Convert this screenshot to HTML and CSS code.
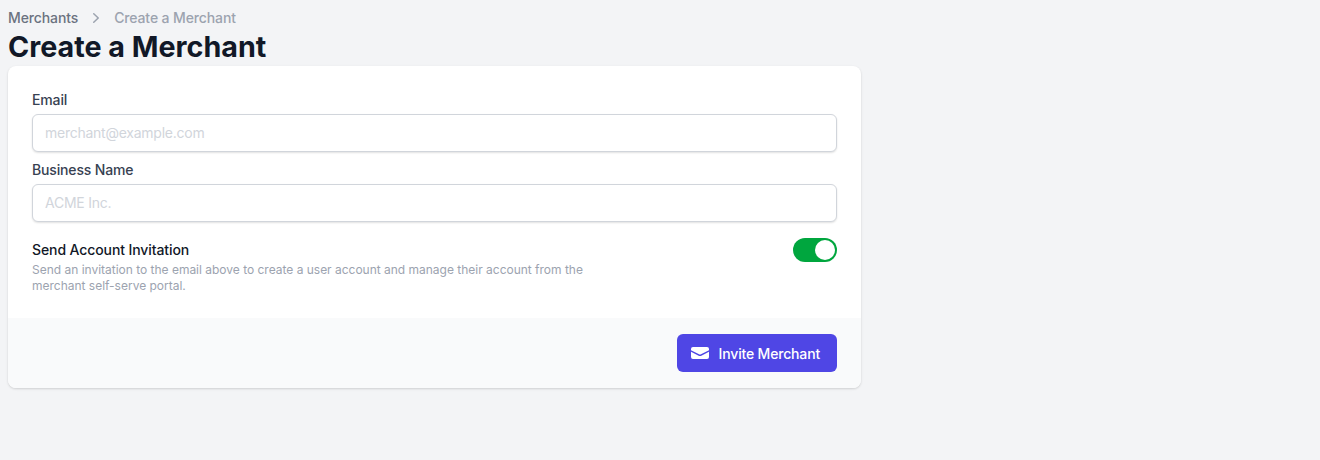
FILE: index.html
```html
<!DOCTYPE html>
<html lang="en">
<head>
    <meta charset="UTF-8">
    <meta name="viewport" content="width=device-width, initial-scale=1.0">
    <title>Create a Merchant</title>
    <link rel="stylesheet" href="styles.css">
</head>
<body>
    <div class="page">
        <nav class="breadcrumb">
            <a class="crumb-link">Merchants</a>
            <svg class="crumb-sep" viewBox="0 0 20 20" fill="currentColor" aria-hidden="true">
                <path fill-rule="evenodd" d="M7.21 14.77a.75.75 0 0 1 .02-1.06L11.17 10 7.23 6.29a.75.75 0 1 1 1.04-1.08l4.5 4.25a.75.75 0 0 1 0 1.08l-4.5 4.25a.75.75 0 0 1-1.06-.02Z" clip-rule="evenodd"/>
            </svg>
            <span class="crumb-current">Create a Merchant</span>
        </nav>
        <h1 class="title">Create a Merchant</h1>

        <form class="card">
            <div class="card-body">
                <div class="field">
                    <label class="label" for="email">Email</label>
                    <input class="input" id="email" type="text" placeholder="merchant@example.com">
                </div>
                <div class="field">
                    <label class="label" for="business">Business Name</label>
                    <input class="input" id="business" type="text" placeholder="ACME Inc.">
                </div>
                <div class="invite-row">
                    <div class="invite-text">
                        <div class="invite-title">Send Account Invitation</div>
                        <p class="invite-desc">Send an invitation to the email above to create a user account and manage their account from the merchant self-serve portal.</p>
                    </div>
                    <button class="toggle" type="button" aria-pressed="true"><span class="toggle-knob"></span></button>
                </div>
            </div>
            <div class="card-footer">
                <button class="button" type="button">
                    <svg class="button-icon" viewBox="0 0 20 20" fill="currentColor" aria-hidden="true">
                        <path d="M3 4a2 2 0 0 0-2 2v1.16l8.55 4.27a1 1 0 0 0 .9 0L19 7.16V6a2 2 0 0 0-2-2H3Z"/>
                        <path d="M19 8.84l-7.66 3.83a3 3 0 0 1-2.68 0L1 8.84V14a2 2 0 0 0 2 2h14a2 2 0 0 0 2-2V8.84Z"/>
                    </svg>
                    Invite Merchant
                </button>
            </div>
        </form>
    </div>
</body>
</html>
```

FILE: styles.css
```css
* {
    box-sizing: border-box;
}

body {
    margin: 0;
    padding: 8px;
    background-color: #f3f4f6;
    font-family: Inter, "Liberation Sans", sans-serif;
    color: #111827;
}

.page {
    width: 853px;
}

/* Breadcrumb */
.breadcrumb {
    display: flex;
    align-items: center;
    height: 20px;
    font-size: 14px;
    font-weight: 500;
    line-height: 20px;
    letter-spacing: -0.12px;
}

.crumb-link {
    color: #6b7280;
}

.crumb-sep {
    width: 20px;
    height: 20px;
    margin: 0 8px;
    color: #9ca3af;
}

.crumb-current {
    color: #9ca3af;
}

.title {
    margin: 0;
    font-size: 28.7px;
    font-weight: 700;
    line-height: 38px;
    color: #111827;
}

/* Card */
.card {
    background-color: #fff;
    border-radius: 8px;
    box-shadow: 0 1px 3px rgba(0, 0, 0, 0.1), 0 1px 2px rgba(0, 0, 0, 0.06);
    overflow: hidden;
}

.card-body {
    padding: 24px;
}

.field {
    margin-bottom: 8px;
}

.label {
    display: block;
    margin-bottom: 4px;
    font-size: 14px;
    font-weight: 500;
    line-height: 20px;
    letter-spacing: -0.15px;
    color: #374151;
}

.input {
    display: block;
    width: 100%;
    height: 38px;
    padding: 0 12px 2px;
    background-color: #fff;
    border: 1px solid #d1d5db;
    border-radius: 6px;
    box-shadow: 0 1px 2px rgba(0, 0, 0, 0.12);
    font-family: inherit;
    font-size: 14px;
    letter-spacing: -0.25px;
    color: #111827;
}

.input::placeholder {
    color: #d1d5db;
    opacity: 1;
}

/* Invitation toggle */
.invite-row {
    display: flex;
    justify-content: space-between;
    align-items: flex-start;
    padding-top: 8px;
}

.invite-text {
    padding-top: 2px;
}

.invite-title {
    font-size: 14px;
    font-weight: 500;
    line-height: 20px;
    letter-spacing: -0.1px;
    color: #111827;
}

.invite-desc {
    width: 560px;
    margin: 2px 0 0;
    font-size: 12px;
    line-height: 16px;
    letter-spacing: -0.01px;
    color: #9ca3af;
}

.toggle {
    display: flex;
    justify-content: flex-end;
    width: 44px;
    height: 24px;
    padding: 2px;
    background-color: #00a63e;
    border: none;
    border-radius: 12px;
}

.toggle-knob {
    width: 20px;
    height: 20px;
    background-color: #fff;
    border-radius: 50%;
}

/* Footer */
.card-footer {
    display: flex;
    justify-content: flex-end;
    padding: 16px 24px;
    background-color: #f9fafb;
}

.button {
    display: flex;
    align-items: center;
    height: 38px;
    padding: 0 17px 0 13px;
    background-color: #4f46e5;
    border: none;
    border-radius: 6px;
    font-family: inherit;
    font-size: 14px;
    font-weight: 500;
    letter-spacing: -0.17px;
    color: #fff;
}

.button-icon {
    width: 20px;
    height: 20px;
    margin-right: 9px;
}
```
